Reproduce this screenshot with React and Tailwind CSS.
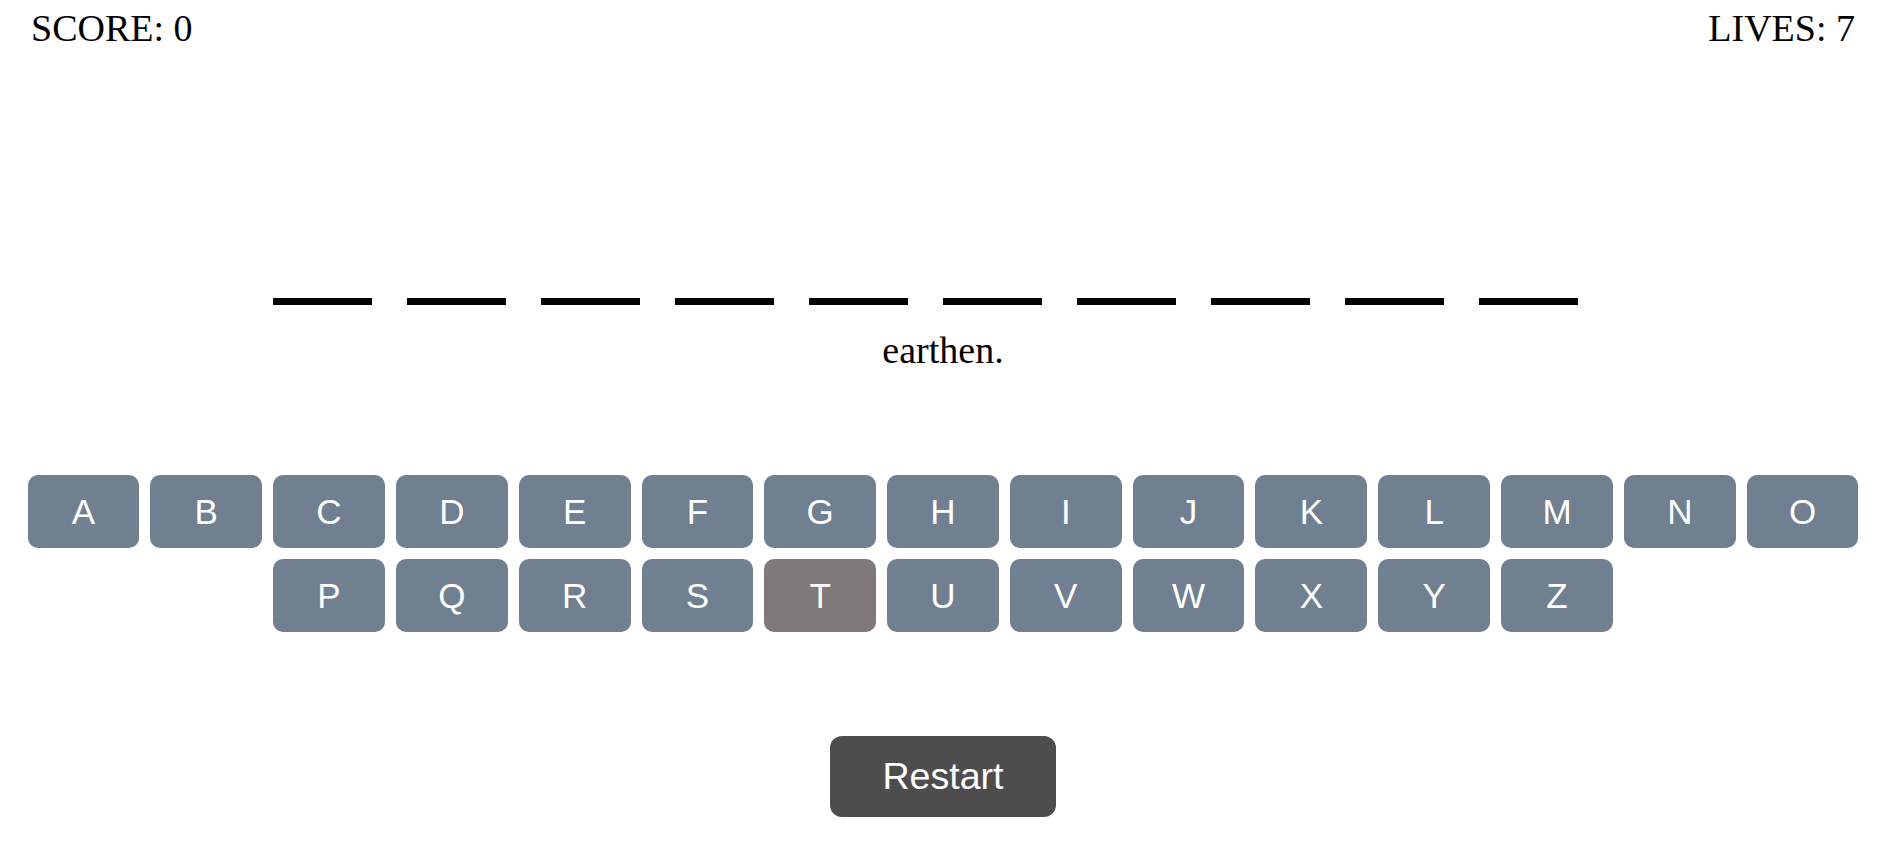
import React, { useState } from 'react';

const WORD_LENGTH = 10;
const ROW_ONE = 'ABCDEFGHIJKLMNO'.split('');
const ROW_TWO = 'PQRSTUVWXYZ'.split('');

const LetterKey = ({ letter, used, onPick }) => (
  <button
    type="button"
    onClick={() => onPick(letter)}
    className={`w-[111.8px] h-[73px] rounded-[10px] text-white text-[35px] leading-none font-['Liberation_Sans',Arial,sans-serif] flex items-center justify-center ${
      used ? 'bg-[#7f7a79]' : 'bg-[#708090]'
    }`}
  >
    {letter}
  </button>
);

const App = () => {
  const [used, setUsed] = useState(['T']);
  const pick = (l) => setUsed((u) => (u.includes(l) ? u : [...u, l]));

  return (
    <div className="w-[1886px] min-h-[847px] bg-white text-black font-['Liberation_Serif','Times_New_Roman',serif]">
      <div className="flex justify-between pl-[31px] pr-[31px] pt-[6px] text-[38px] leading-[44px]">
        <span>SCORE: 0</span>
        <span>LIVES: 7</span>
      </div>

      {/* blanks: trailing margin on each one, as the original word display */}
      <div className="flex justify-center mt-[248px]">
        {Array.from({ length: WORD_LENGTH }).map((_, i) => (
          <div key={i} className="w-[99px] h-[7px] bg-black mr-[35px]" />
        ))}
      </div>

      <p className="text-center text-[38px] leading-[44px] mt-[23px]">earthen.</p>

      <div className="flex flex-col items-center gap-[11px] mt-[103px]">
        <div className="flex gap-[11px]">
          {ROW_ONE.map((l) => (
            <LetterKey key={l} letter={l} used={used.includes(l)} onPick={pick} />
          ))}
        </div>
        <div className="flex gap-[11px]">
          {ROW_TWO.map((l) => (
            <LetterKey key={l} letter={l} used={used.includes(l)} onPick={pick} />
          ))}
        </div>
      </div>

      <div className="flex justify-center mt-[104px]">
        <button
          type="button"
          onClick={() => setUsed([])}
          className="w-[226px] h-[81px] rounded-[12px] bg-[#4d4d4d] text-white text-[37.6px] leading-none font-['Liberation_Sans',Arial,sans-serif]"
        >
          Restart
        </button>
      </div>
    </div>
  );
};

export default App;
